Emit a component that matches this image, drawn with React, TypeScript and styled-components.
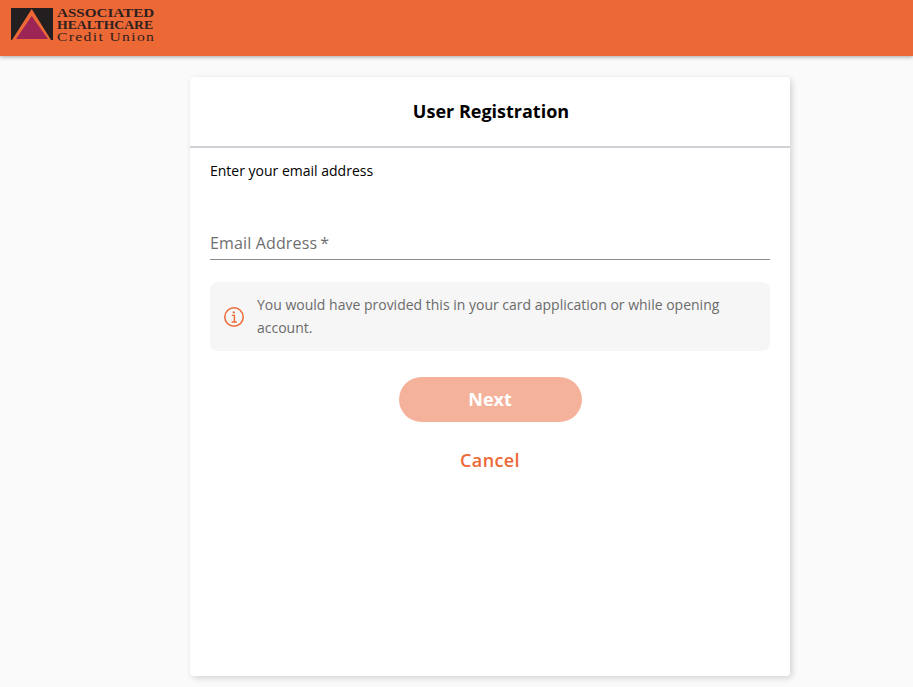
import React from 'react';
import styled, { createGlobalStyle } from 'styled-components';

const GlobalStyle = createGlobalStyle`
  html, body {
    margin: 0;
    padding: 0;
    height: 100%;
    overflow: hidden;
    background: #fafafa;
    font-family: "Open Sans", "Liberation Sans", sans-serif;
  }
`;

function Logo() {
  return (
    <LogoWrap>
      <svg width="42" height="32" viewBox="0 0 42 32">
        <rect x="0" y="0" width="42" height="32" fill="#231f20" />
        <polygon points="1,32 20.7,1 40,32" fill="#ec6936" />
        <polygon points="5,31 20.7,8 37,31" fill="#9c2555" />
      </svg>
      <LogoText>
        <LogoBold $stretch={1.315}>ASSOCIATED</LogoBold>
        <LogoBold $stretch={1.19}>HEALTHCARE</LogoBold>
        <LogoLight>Credit Union</LogoLight>
      </LogoText>
    </LogoWrap>
  );
}

function InfoIcon() {
  return (
    <svg width="20" height="20" viewBox="0 0 20 20" fill="none" stroke="#ec6936">
      <circle cx="10" cy="10" r="9.2" strokeWidth="1.5" />
      <circle cx="9.8" cy="5.4" r="1.1" fill="#ec6936" stroke="none" />
      <path d="M7.8 8.4h2.6v6.6M7.6 15h5.2" strokeWidth="1.4" />
    </svg>
  );
}

function App() {
  return (
    <Page>
      <GlobalStyle />
      <Header>
        <Logo />
      </Header>
      <Main>
        <Card>
          <CardHeader>
            <Title>User Registration</Title>
          </CardHeader>
          <CardBody>
            <Intro>Enter your email address</Intro>
            <Field>
              <FieldLabel>
                Email Address<Star>*</Star>
              </FieldLabel>
            </Field>
            <Notice>
              <NoticeIcon>
                <InfoIcon />
              </NoticeIcon>
              <NoticeText>
                You would have provided this in your card application or while opening account.
              </NoticeText>
            </Notice>
            <Actions>
              <NextButton type="button">Next</NextButton>
              <CancelButton type="button">Cancel</CancelButton>
            </Actions>
          </CardBody>
        </Card>
      </Main>
    </Page>
  );
}

const Page = styled.div`
  height: 687px;
  display: flex;
  flex-direction: column;
  background: #fafafa;
`;

const Header = styled.header`
  height: 56px;
  flex: none;
  background: #ec6936;
  box-shadow: 0 1px 4px rgba(0, 0, 0, 0.35);
  display: flex;
  align-items: center;
  padding: 0 0 5px 11px;
  box-sizing: border-box;
`;

const LogoWrap = styled.div`
  display: flex;
  align-items: flex-start;
  gap: 4px;
`;

const LogoText = styled.div`
  display: flex;
  flex-direction: column;
  font-family: "Liberation Serif", serif;
  color: #2e201e;
  margin-top: -1px;
`;

const LogoBold = styled.span<{ $stretch: number }>`
  font-size: 11.5px;
  line-height: 12px;
  font-weight: 700;
  white-space: nowrap;
  transform: scaleX(${({ $stretch }) => $stretch});
  transform-origin: left center;
`;

const LogoLight = styled.span`
  font-size: 12px;
  line-height: 13px;
  letter-spacing: 1.05px;
  white-space: nowrap;
  transform: scaleX(1.3);
  transform-origin: left center;
`;

const Main = styled.main`
  flex: 1;
  display: flex;
  justify-content: center;
  padding: 21px 0 11px 67px;
  min-height: 0;
`;

const Card = styled.section`
  width: 600px;
  background: #fff;
  border-radius: 4px;
  box-shadow: 2px 2px 6px rgba(0, 0, 0, 0.16);
  display: flex;
  flex-direction: column;
`;

const CardHeader = styled.div`
  height: 71px;
  flex: none;
  box-sizing: border-box;
  padding: 0 0 2px 2px;
  border-bottom: 2px solid #d0d0d6;
  display: flex;
  align-items: center;
  justify-content: center;
`;

const Title = styled.h1`
  margin: 0;
  font-size: 18px;
  font-weight: 700;
  color: #000;
`;

const CardBody = styled.div`
  padding: 13px 20px 0;
  display: flex;
  flex-direction: column;
`;

const Intro = styled.p`
  margin: 0;
  font-size: 14px;
  line-height: 20px;
  color: #000;
`;

const Field = styled.div`
  margin-top: 43px;
  height: 36px;
  box-sizing: border-box;
  border-bottom: 1px solid #8c8c8c;
  padding-top: 2px;
  display: flex;
  align-items: center;
`;

const FieldLabel = styled.label`
  font-size: 16px;
  letter-spacing: 0.15px;
  color: #6f6f6f;
`;

const Star = styled.span`
  margin-left: 3px;
`;

const Notice = styled.div`
  margin-top: 22px;
  height: 69px;
  box-sizing: border-box;
  background: #f6f6f6;
  border-radius: 8px;
  padding: 0 14px;
  display: flex;
  align-items: center;
  gap: 13px;
`;

const NoticeIcon = styled.span`
  display: flex;
  flex: none;
`;

const NoticeText = styled.p`
  margin: -2px 0 0;
  font-size: 14px;
  line-height: 23px;
  color: #6b6b6b;
`;

const Actions = styled.div`
  margin-top: 26px;
  display: flex;
  flex-direction: column;
  align-items: center;
`;

const NextButton = styled.button`
  width: 183px;
  height: 45px;
  padding: 0 0 2px;
  border: none;
  border-radius: 23px;
  background: #f5b29b;
  color: #fff;
  font-family: inherit;
  font-size: 18px;
  font-weight: 700;
`;

const CancelButton = styled.button`
  margin-top: 16px;
  height: 45px;
  padding: 0 16px 2px;
  border: none;
  background: transparent;
  color: #ec6936;
  font-family: inherit;
  font-size: 18px;
  font-weight: 600;
  letter-spacing: 0.4px;
`;

export default App;
